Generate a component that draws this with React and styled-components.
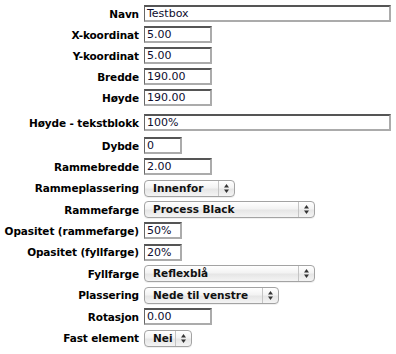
import React from 'react';
import styled, { createGlobalStyle } from 'styled-components';

const GlobalStyle = createGlobalStyle`
  html, body {
    margin: 0;
    padding: 0;
    background: #fff;
  }
  body {
    font-family: "DejaVu Sans", Verdana, sans-serif;
    font-size: 11px;
    color: #000;
  }
`;

const Form = styled.div`
  width: 396px;
  height: 354px;
  padding-top: 3px;
  box-sizing: border-box;
  overflow: hidden;
`;

const Row = styled.div`
  display: grid;
  grid-template-columns: 139px 1fr;
  column-gap: 5px;
  align-items: center;
  height: ${p => p.$h || 21}px;
  margin-top: ${p => p.$mt || 0}px;
`;

const Label = styled.label`
  text-align: right;
  font-weight: bold;
  font-size: 10.5px;
  white-space: nowrap;
  letter-spacing: -0.1px;
`;

const TextInput = styled.div`
  width: ${p => p.$w}px;
  height: 17px;
  box-sizing: border-box;
  border-top: 2px solid #555;
  border-left: 1px solid #666;
  border-right: 2px solid #ababab;
  border-bottom: 2px solid #ababab;
  padding: 0 0 0 2px;
  font-size: 11px;
  line-height: 13px;
  color: #0d0d2e;
  background: #fff;
  white-space: nowrap;
  overflow: hidden;
`;

const SelectBox = styled.div`
  width: ${p => p.$w}px;
  height: 17px;
  box-sizing: border-box;
  display: flex;
  align-items: stretch;
  border: 1px solid #a3a3a3;
  border-radius: 4px;
  background: linear-gradient(#ffffff 0%, #f3f3f3 45%, #e6e6e6 55%, #f4f4f4 100%);
  box-shadow: 0 1px 0 rgba(0, 0, 0, 0.06);
`;

const SelectText = styled.span`
  flex: 1;
  padding-left: 8px;
  font-weight: bold;
  font-size: 10.5px;
  line-height: 15px;
  color: #111;
  white-space: nowrap;
  overflow: hidden;
`;

const ArrowCell = styled.span`
  width: 15px;
  border-left: 1px solid #c4c4c4;
  display: flex;
  align-items: center;
  justify-content: center;
`;

const Arrows = () => (
  <svg width="5" height="9" viewBox="0 0 5 9">
    <path d="M2.5 0 L5 3.5 L0 3.5 Z" fill="#333" />
    <path d="M2.5 9 L5 5.5 L0 5.5 Z" fill="#333" />
  </svg>
);

const Select = ({ w, children }) => (
  <SelectBox $w={w}>
    <SelectText>{children}</SelectText>
    <ArrowCell><Arrows /></ArrowCell>
  </SelectBox>
);

const fields = [
  { label: 'Navn', type: 'text', value: 'Testbox', w: 247 },
  { label: 'X-koordinat', type: 'text', value: '5.00', w: 68 },
  { label: 'Y-koordinat', type: 'text', value: '5.00', w: 68 },
  { label: 'Bredde', type: 'text', value: '190.00', w: 68 },
  { label: 'Høyde', type: 'text', value: '190.00', w: 68 },
  { label: 'Høyde - tekstblokk', type: 'text', value: '100%', w: 247, mt: 4 },
  { label: 'Dybde', type: 'text', value: '0', w: 38, mt: 2 },
  { label: 'Rammebredde', type: 'text', value: '2.00', w: 68, h: 21.43 },
  { label: 'Rammeplassering', type: 'select', value: 'Innenfor', w: 91, h: 21.43 },
  { label: 'Rammefarge', type: 'select', value: 'Process Black', w: 171, h: 21.43 },
  { label: 'Opasitet (rammefarge)', type: 'text', value: '50%', w: 38, h: 21.43 },
  { label: 'Opasitet (fyllfarge)', type: 'text', value: '20%', w: 38, h: 21.43 },
  { label: 'Fyllfarge', type: 'select', value: 'Reflexblå', w: 171, h: 21.43 },
  { label: 'Plassering', type: 'select', value: 'Nede til venstre', w: 135, h: 21.43 },
  { label: 'Rotasjon', type: 'text', value: '0.00', w: 68, h: 21.43 },
  { label: 'Fast element', type: 'select', value: 'Nei', w: 48, h: 21.43 },
];

export default function App() {
  return (
    <>
      <GlobalStyle />
      <Form>
        {fields.map(f => (
          <Row key={f.label} $h={f.h} $mt={f.mt}>
            <Label>{f.label}</Label>
            <div>
              {f.type === 'select'
                ? <Select w={f.w}>{f.value}</Select>
                : <TextInput $w={f.w}>{f.value}</TextInput>}
            </div>
          </Row>
        ))}
      </Form>
    </>
  );
}
